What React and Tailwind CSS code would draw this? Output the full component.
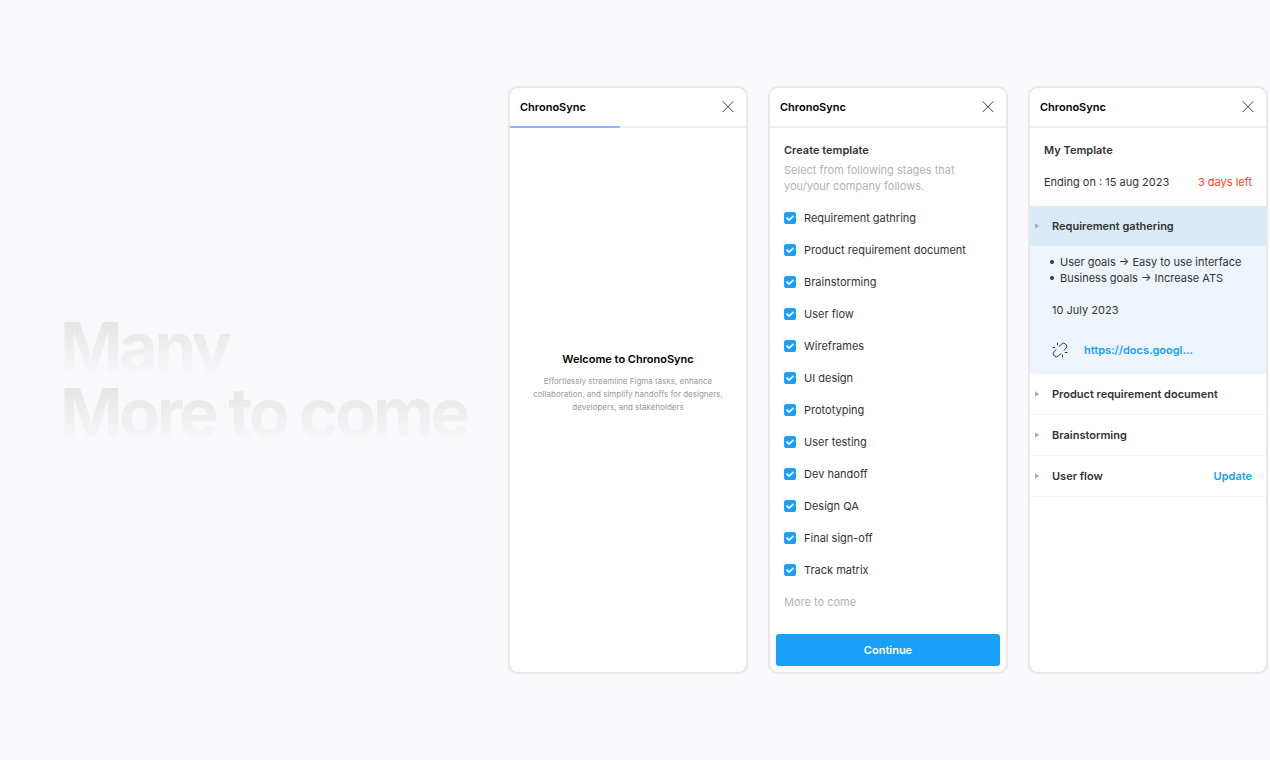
import { useState } from "react";
import clsx from "clsx";

const STAGES = [
  "Requirement gathring",
  "Product requirement document",
  "Brainstorming",
  "User flow",
  "Wireframes",
  "UI design",
  "Prototyping",
  "User testing",
  "Dev handoff",
  "Design QA",
  "Final sign-off",
  "Track matrix",
];

const GOALS = ["User goals → Easy to use interface", "Business goals → Increase ATS"];

const PENDING_STAGES = [
  { name: "Product requirement document" },
  { name: "Brainstorming" },
  { name: "User flow", action: "Update" },
];

function CloseIcon() {
  return (
    <svg viewBox="0 0 12 12" className="size-3" fill="none" stroke="currentColor" aria-hidden="true">
      <path d="M0.7 0.4 11.3 11M11.3 0.4 0.7 11" />
    </svg>
  );
}

function CaretIcon() {
  return (
    <svg viewBox="0 0 6 6" className="size-1.5 shrink-0 fill-[#a8adb2]" aria-hidden="true">
      <path d="M1 0.2 5.2 3 1 5.8Z" />
    </svg>
  );
}

function BrokenLinkIcon() {
  return (
    <svg
      viewBox="0 0 16 16"
      className="size-4 shrink-0"
      fill="none"
      stroke="#333333"
      strokeLinecap="round"
      aria-hidden="true"
    >
      <path d="M7.2 4.4 9.4 2.2a3.1 3.1 0 0 1 4.4 4.4L12 8.2" />
      <path d="M8.8 11.6 6.6 13.8a3.1 3.1 0 0 1-4.4-4.4L4 7.8" />
      <path d="M5.5 1v1.8M1 5.5h1.8M10.5 13.2V15M13.2 10.5H15" />
    </svg>
  );
}

function Panel({ progress, children }) {
  return (
    <section className="flex w-60 shrink-0 flex-col overflow-hidden rounded-[10px] border-2 border-[#e8e8e8] bg-white">
      <header>
        <div className="flex h-[38px] items-center justify-between pr-3 pl-2.5">
          <h2 className="font-semibold text-black">ChronoSync</h2>
          <button type="button" aria-label="Close" className="text-[#444444]">
            <CloseIcon />
          </button>
        </div>
        <div className="h-0.5 bg-[#f0f0f0]">
          {progress ? <div className="h-full bg-[#8bb8ff]" style={{ width: `${progress}%` }} /> : null}
        </div>
      </header>
      {children}
    </section>
  );
}

function WelcomePanel() {
  return (
    <Panel progress={46.6}>
      <div className="flex grow flex-col items-center justify-center px-5 pb-9 text-center">
        <h3 className="font-semibold text-black">Welcome to ChronoSync</h3>
        <p className="mt-2 text-[8px] leading-[13px] text-[#999999]">
          Effortlessly streamline Figma tasks, enhance collaboration, and simplify handoffs for
          designers, developers, and stakeholders
        </p>
      </div>
    </Panel>
  );
}

function StageCheckbox({ label, checked, onChange }) {
  return (
    <label className="flex h-8 items-center gap-2">
      <span className="grid size-3 place-items-center">
        <input
          type="checkbox"
          checked={checked}
          onChange={onChange}
          className="col-start-1 row-start-1 size-3 appearance-none rounded-xs border border-[#18a0fb] checked:bg-[#18a0fb]"
        />
        <svg
          viewBox="0 0 12 12"
          className={clsx("pointer-events-none col-start-1 row-start-1 size-3", !checked && "hidden")}
          fill="none"
          stroke="#ffffff"
          strokeWidth="1.7"
          aria-hidden="true"
        >
          <path d="M2.5 5.6 5.1 8.1 9.6 3.8" />
        </svg>
      </span>
      {label}
    </label>
  );
}

function CreateTemplatePanel() {
  const [selected, setSelected] = useState(STAGES);

  const toggleStage = (stage) => {
    setSelected((current) =>
      current.includes(stage) ? current.filter((item) => item !== stage) : [...current, stage]
    );
  };

  return (
    <Panel>
      <form className="flex flex-col" onSubmit={(event) => event.preventDefault()}>
        <div className="px-3.5 pt-3.5">
          <h3 className="font-semibold">Create template</h3>
          <p className="mt-1 pr-4 text-[#b3b3b3]">
            Select from following stages that you/your company follows.
          </p>
          <div className="mt-2">
            {STAGES.map((stage) => (
              <StageCheckbox
                key={stage}
                label={stage}
                checked={selected.includes(stage)}
                onChange={() => toggleStage(stage)}
              />
            ))}
            <p className="flex h-8 items-center text-[#b3b3b3]">More to come</p>
          </div>
        </div>
        <button
          type="submit"
          className="mx-1.5 mt-4 mb-1.5 h-8 rounded-[3px] bg-[#18a0fb] font-semibold text-white"
        >
          Continue
        </button>
      </form>
    </Panel>
  );
}

function TemplatePanel() {
  return (
    <Panel>
      <div className="px-3.5 pt-3.5 pb-4">
        <h3 className="font-semibold">My Template</h3>
        <div className="mt-4 flex justify-between">
          <p>Ending on : 15 aug 2023</p>
          <p className="text-[#f24822]">3 days left</p>
        </div>
      </div>

      <button
        type="button"
        aria-expanded="true"
        className="flex h-10 items-center gap-3 bg-[#daebf7] pl-1 font-semibold"
      >
        <CaretIcon />
        Requirement gathering
      </button>
      <div className="bg-[#edf4fb] pt-2 pr-3.5 pb-4 pl-5">
        <ul>
          {GOALS.map((goal) => (
            <li
              key={goal}
              className="flex items-center gap-1.5 before:size-1 before:rounded-full before:bg-[#333333]"
            >
              {goal}
            </li>
          ))}
        </ul>
        <p className="mt-4 pl-0.5">10 July 2023</p>
        <div className="mt-6 flex items-center gap-4 pl-0.5">
          <BrokenLinkIcon />
          <a href="#docs" className="font-semibold text-[#18a0fb]">
            https://docs.googl...
          </a>
        </div>
      </div>

      {PENDING_STAGES.map((stage) => (
        <div
          key={stage.name}
          className="flex h-[41px] items-center justify-between border-b border-[#f7f7f7] pr-3.5 pl-1"
        >
          <button type="button" aria-expanded="false" className="flex items-center gap-3 font-semibold">
            <CaretIcon />
            {stage.name}
          </button>
          {stage.action ? (
            <button type="button" className="font-semibold text-[#18a0fb]">
              {stage.action}
            </button>
          ) : null}
        </div>
      ))}
    </Panel>
  );
}

function HeadlineLine({ children }) {
  return (
    <span className="block bg-linear-to-b from-[#e5e5e5] from-10% to-[#f9f9fb] bg-clip-text text-transparent">
      {children}
    </span>
  );
}

export default function App() {
  return (
    <main className="flex min-h-screen items-center bg-[#f9f9fb] pr-0.5 pl-15 font-['Inter',sans-serif] text-[11px] leading-4 text-[#333333]">
      <h1 className="grow text-[67px] leading-[66px] font-bold tracking-tighter whitespace-nowrap">
        <HeadlineLine>Many</HeadlineLine>
        <HeadlineLine>More to come</HeadlineLine>
      </h1>
      <div className="flex gap-5">
        <WelcomePanel />
        <CreateTemplatePanel />
        <TemplatePanel />
      </div>
    </main>
  );
}
